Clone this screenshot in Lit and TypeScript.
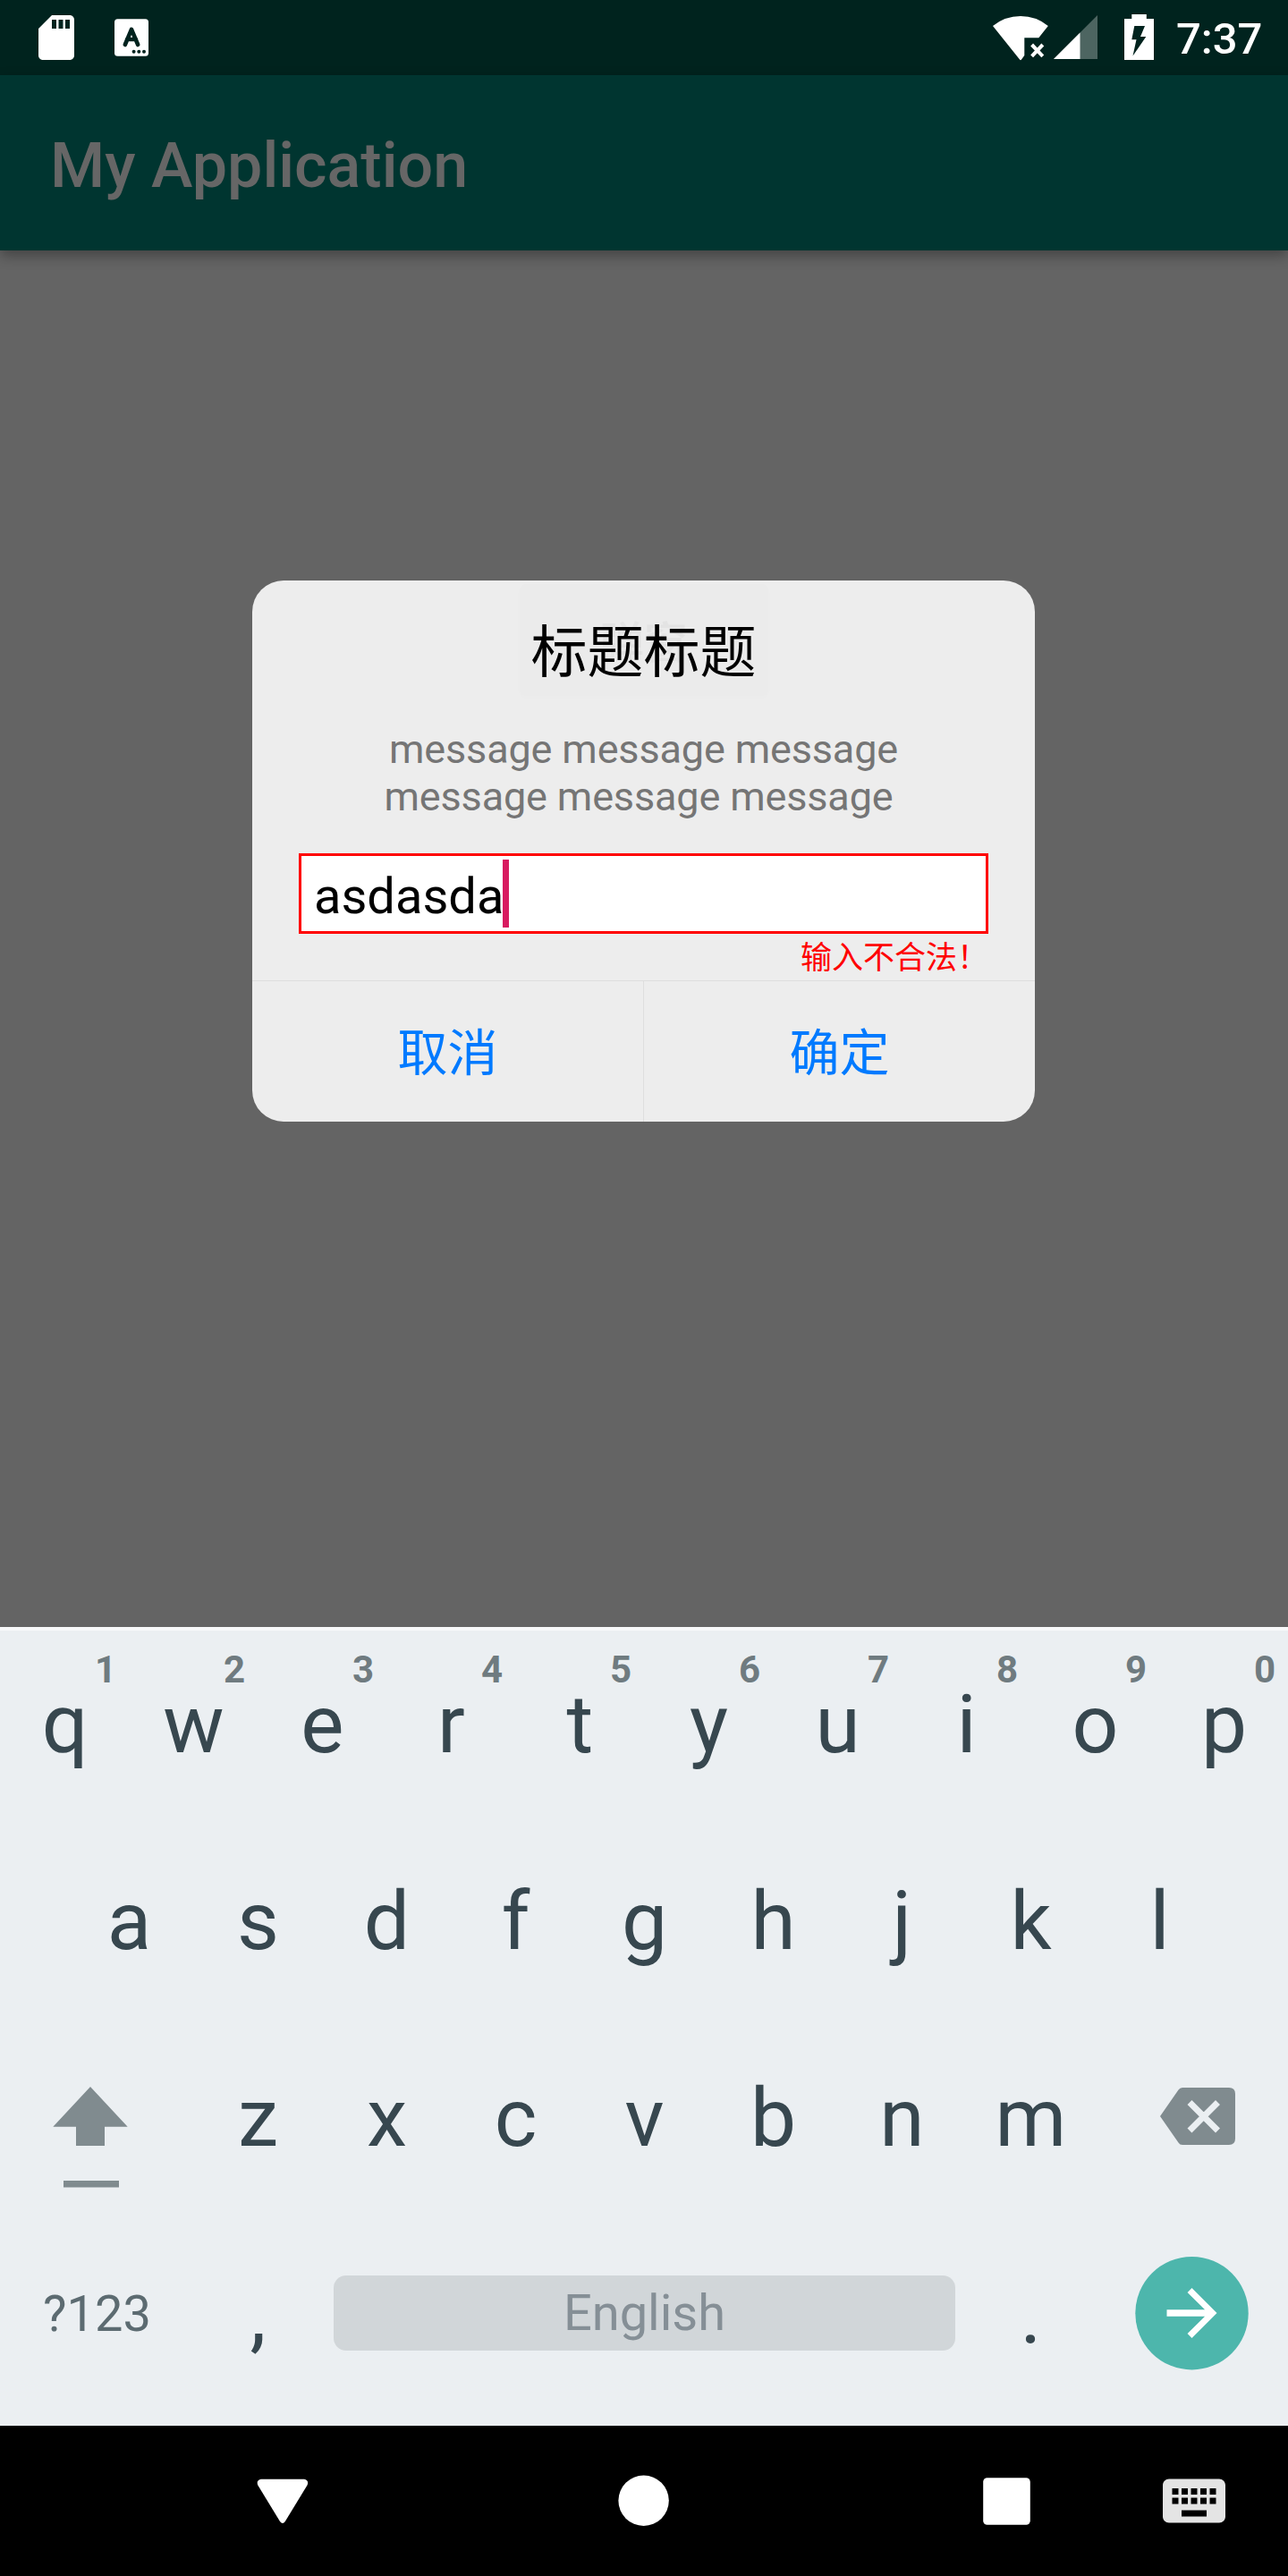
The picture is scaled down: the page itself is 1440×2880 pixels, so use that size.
import { LitElement, html, svg, css } from "lit";
import { customElement, property } from "lit/decorators.js";

type Key = { label: string; hint?: string };

const TOP_ROW: Key[] = [..."qwertyuiop"].map((label, i) => ({ label, hint: String((i + 1) % 10) }));
const HOME_ROW: Key[] = [..."asdfghjkl"].map((label) => ({ label }));
const BOTTOM_ROW: Key[] = [..."zxcvbnm"].map((label) => ({ label }));

@customElement("status-bar")
class StatusBar extends LitElement {
  static styles = css`
    :host {
      display: flex;
      justify-content: space-between;
      height: 84px;
      background: #00231e;
      font-family: Roboto, sans-serif;
    }
    .side {
      display: flex;
    }
    svg {
      display: block;
      height: 84px;
    }
    .left {
      width: 200px;
    }
    .right {
      width: 215px;
    }
    .time {
      width: 125px;
      font-size: 49px;
      font-weight: 500;
      line-height: 88px;
      color: #fff;
    }
  `;
  render() {
    return html`
      <div class="side">
        <svg class="left" viewBox="0 0 200 84" fill="#fff">
          <path transform="translate(33 12) scale(2.5)"
            d="M18 2h-8L4.02 8 4 20c0 1.1.9 2 2 2h12c1.1 0 2-.9 2-2V4c0-1.1-.9-2-2-2zm-6 6h-2V4h2v4zm3 0h-2V4h2v4zm3 0h-2V4h2v4z"/>
          <rect x="128" y="21.3" width="38" height="41.4" rx="3.5"/>
          <path d="M139.8 50 147 32.8l7.200 17.200M142 44h10" fill="none" stroke="#00231e" stroke-width="4.600" stroke-linecap="round" stroke-linejoin="round"/>
          <g fill="#00231e"><circle cx="149.600" cy="57.700" r="2"/><circle cx="155.300" cy="57.700" r="2"/><circle cx="161" cy="57.700" r="2"/></g>
        </svg>
      </div>
      <div class="side">
        <svg class="right" viewBox="1100 0 215 84" fill="#fff">
          <path d="M1110 29Q1123.500 18 1141 18T1171.800 29L1161.300 42.200H1145.300V62L1142 66.600Q1141 67.800 1140 66.600Z"/>
          <path d="M1153.600 50l12.200 12.800M1165.800 50l-12.200 12.800" stroke="#fff" stroke-width="4"/>
          <path d="M1227 17v49h-49z" opacity=".3"/>
          <path d="M1207.500 36.500V66H1178z"/>
          <path fill-rule="evenodd" d="M1265.300 16h16.500v5h8.200v46h-33V21h8.300zM1268.300 29l-3 15.300h5.200L1266.500 62.500 1281.300 41h-6.300L1280 29z"/>
        </svg>
        <div class="time">7:37</div>
      </div>
    `;
  }
}

@customElement("alert-dialog")
class AlertDialog extends LitElement {
  @property() heading = "标题标题";
  @property() value = "asdasda";

  static styles = css`
    :host {
      display: flex;
      flex-direction: column;
      box-sizing: border-box;
      position: relative;
      width: 875px;
      height: 605px;
      border-radius: 35px;
      overflow: hidden;
      background: #ededed;
      font-family: Roboto, "Noto Sans CJK SC", sans-serif;
    }
    .ghost {
      position: absolute;
      left: 299px;
      top: 4px;
      width: 278px;
      height: 125px;
      border-radius: 7px;
      background: #ebebeb;
      box-shadow: 0 2px 8px rgba(0, 0, 0, 0.012);
      font: 500 49px/124px "Noto Sans CJK SC", sans-serif;
      color: #e3e3e3;
      text-align: center;
    }
    .title {
      position: relative;
      margin-top: 30px;
      font: 400 63px/90px "Noto Sans CJK SC", sans-serif;
      color: #000;
      text-align: center;
    }
    .message {
      margin-top: 42px;
      font-size: 45px;
      letter-spacing: -0.15px;
      line-height: 53px;
      color: #757575;
      text-align: center;
      white-space: pre;
    }
    .field {
      display: flex;
      align-items: center;
      box-sizing: border-box;
      height: 90px;
      margin: 37px 52px 0;
      padding: 0 14px;
      border: 3px solid #f00;
      background: #fff;
      font-size: 56px;
      line-height: 80px;
      color: #000;
    }
    .value {
      padding-top: 6px;
      margin-right: -1px;
    }
    .caret {
      width: 7px;
      height: 76px;
      background: #d81b60;
    }
    .error {
      margin: 1px 52px 0;
      height: 51px;
      font: 400 35px/46px "Noto Sans CJK SC", sans-serif;
      color: #f00;
      text-align: right;
    }
    .actions {
      display: flex;
      flex: 1;
      border-top: 1px solid #dedede;
    }
    .action {
      flex: 1;
      font: 400 56px/152px "Noto Sans CJK SC", sans-serif;
      color: #007aff;
      text-align: center;
    }
    .rule {
      width: 1px;
      background: #dedede;
    }
  `;
  render() {
    return html`
      <div class="ghost">弹窗</div>
      <div class="title">${this.heading}</div>
      <div class="message">${"message message message\nmessage message message "}</div>
      <div class="field"><span class="value">${this.value}</span><span class="caret"></span></div>
      <div class="error">输入不合法！</div>
      <div class="actions">
        <div class="action">取消</div>
        <div class="rule"></div>
        <div class="action">确定</div>
      </div>
    `;
  }
}

@customElement("soft-keyboard")
class SoftKeyboard extends LitElement {
  static styles = css`
    :host {
      display: block;
      box-sizing: border-box;
      height: 893px;
      background: #ebeff2;
      border-top: 4px solid #f8f9fa;
      font-family: Roboto, sans-serif;
      color: #37474f;
    }
    .row {
      display: flex;
      height: 220px;
      justify-content: center;
    }
    .row.first {
      height: 213px;
    }
    .key {
      position: relative;
      display: flex;
      flex-direction: column;
      justify-content: flex-end;
      box-sizing: border-box;
      width: 144px;
      padding: 0 0 54px 1px;
      font-size: 91px;
      line-height: 108px;
      text-align: center;
    }
    .hint {
      position: absolute;
      top: 19px;
      left: 90px;
      width: 56px;
      font-size: 42px;
      font-weight: 700;
      line-height: 50px;
      color: #6f7b80;
    }
    .wide {
      width: 216px;
    }
    .wide svg {
      display: block;
      width: 216px;
      height: 220px;
    }
    .symbols {
      box-sizing: border-box;
      width: 216px;
      padding-left: 1px;
      font-size: 56px;
      line-height: 222px;
      color: #5c6b71;
      text-align: center;
    }
    .space {
      width: 695px;
      height: 84px;
      margin: 68px 12px 0 13px;
      border-radius: 14px;
      background: #d1d6d9;
      font-size: 56px;
      line-height: 84px;
      color: #858f96;
      text-align: center;
    }
  `;
  private keys(row: Key[]) {
    return row.map(
      (k) => html`<div class="key">${k.hint ? html`<span class="hint">${k.hint}</span>` : null}<span>${k.label}</span></div>`
    );
  }
  private icon(body: unknown) {
    return html`<div class="wide"><svg viewBox="0 0 216 220">${body}</svg></div>`;
  }
  render() {
    return html`
      <div class="row first">${this.keys(TOP_ROW)}</div>
      <div class="row">${this.keys(HOME_ROW)}</div>
      <div class="row">
        ${this.icon(svg`<path fill="#808b8f" d="M101 77l41.700 44.700H117V143H85v-21.300H59.300zM71 182h62v7.500H71z"/>`)}
        ${this.keys(BOTTOM_ROW)}
        ${this.icon(svg`<path fill="#808b8f" d="M98 78h52q7 0 7 7v50q0 7-7 7H98q-3 0-4.500-2.500L73 110l20.500-29.500Q95 78 98 78z"/>
          <path d="M106 94.500l31.500 31.500M137.500 94.500L106 126" stroke="#ebeff2" stroke-width="7"/>`)}
      </div>
      <div class="row">
        <div class="symbols">?123</div>
        <div class="key">,</div>
        <div class="space">English</div>
        <div class="key">.</div>
        ${this.icon(svg`<circle cx="108.500" cy="110.200" r="63.200" fill="#4db6ac"/>
          <path fill="#fff" transform="translate(66.500 68) scale(3.5)" d="M12 4l-1.410 1.410L16.170 10.900H4v2.200h12.170l-5.580 5.490L12 20l8-8z"/>`)}
      </div>
    `;
  }
}

@customElement("nav-bar")
class NavBar extends LitElement {
  static styles = css`
    :host {
      display: block;
      height: 168px;
      background: #000;
    }
    svg {
      display: block;
      width: 1440px;
      height: 168px;
    }
  `;
  render() {
    return html`
      <svg viewBox="0 0 1440 168" fill="#fff">
        <path d="M292 59.800H340Q345.800 61 343.500 66.500L318.800 107Q316 111 313 107L288.300 66.500Q286 61 292 59.800Z"/>
        <circle cx="719.600" cy="83.700" r="28.200"/>
        <rect x="1099.200" y="58.200" width="52.600" height="52.600" rx="4.500"/>
        <path fill="#e4e4e4" transform="translate(1293 42) scale(3.5)"
          d="M20 5H4c-1.100 0-1.990.9-1.990 2L2 17c0 1.100.9 2 2 2h16c1.100 0 2-.9 2-2V7c0-1.100-.9-2-2-2zm-9 3h2v2h-2V8zm0 3h2v2h-2v-2zM8 8h2v2H8V8zm0 3h2v2H8v-2zm-1 2H5v-2h2v2zm0-3H5V8h2v2zm9 7H8v-2h8v2zm0-4h-2v-2h2v2zm0-3h-2V8h2v2zm3 3h-2v-2h2v2zm0-3h-2V8h2v2z"/>
      </svg>
    `;
  }
}

@customElement("app-root")
class AppRoot extends LitElement {
  static styles = css`
    :host {
      display: flex;
      flex-direction: column;
      width: 1440px;
      height: 2880px;
      overflow: hidden;
      background: #646464;
      font-family: Roboto, sans-serif;
    }
    .app-bar {
      box-sizing: border-box;
      height: 196px;
      padding-left: 56px;
      background: #003530;
      box-shadow: 0 6px 14px rgba(0, 0, 0, 0.32);
      font-size: 70px;
      font-weight: 500;
      line-height: 202px;
      color: #666;
    }
    .content {
      flex: 1;
      padding: 369px 0 0 282px;
    }
  `;
  render() {
    return html`
      <status-bar></status-bar>
      <div class="app-bar">My Application</div>
      <div class="content"><alert-dialog></alert-dialog></div>
      <soft-keyboard></soft-keyboard>
      <nav-bar></nav-bar>
    `;
  }
}
